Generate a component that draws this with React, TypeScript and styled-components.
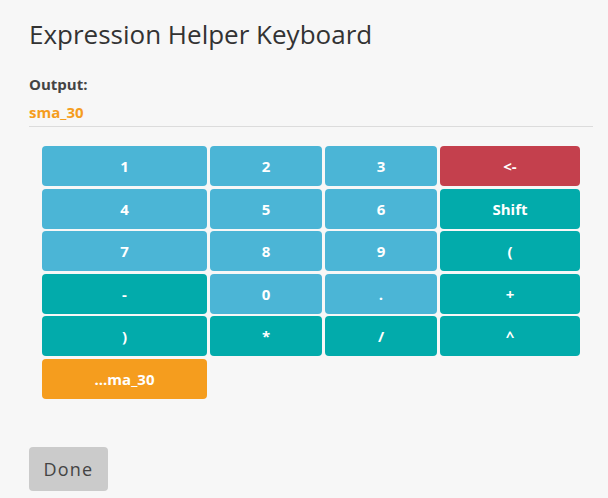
import styled, { createGlobalStyle } from 'styled-components';

const GlobalStyle = createGlobalStyle`
  html, body {
    margin: 0;
    padding: 0;
    background: #f7f7f7;
    font-family: "Open Sans", "Liberation Sans", sans-serif;
  }
`;

const Page = styled.div`
  width: 608px;
  height: 498px;
  box-sizing: border-box;
  padding: 16px 15px 0 29px;
  display: flex;
  flex-direction: column;
`;

const Title = styled.h1`
  margin: 0;
  font-size: 26px;
  font-weight: 400;
  line-height: 36px;
  color: #333;
`;

const OutputBlock = styled.div`
  margin-top: 22px;
  padding-bottom: 4px;
  border-bottom: 1px solid #dcdcdc;
`;

const Label = styled.div`
  font-size: 15px;
  font-weight: 700;
  color: #444;
  line-height: 20px;
`;

const OutputValue = styled.div`
  margin-top: 8px;
  font-size: 15px;
  font-weight: 700;
  color: #f59d1e;
  line-height: 20px;
`;

const Keyboard = styled.div`
  display: grid;
  grid-template-columns: 165px 112px 112px 140px;
  grid-auto-rows: 40px;
  column-gap: 3px;
  row-gap: 2.6px;
  margin: 19px 0 0 13px;
`;

type Tone = 'digit' | 'op' | 'del' | 'var';

const toneColors: Record<Tone, string> = {
  digit: '#4bb5d6',
  op: '#02abab',
  del: '#c4404d',
  var: '#f59d1e',
};

const Key = styled.button<{ $tone: Tone }>`
  border: none;
  border-radius: 4px;
  background: ${(p) => toneColors[p.$tone]};
  color: #fff;
  font-family: "Open Sans", "Liberation Sans", sans-serif;
  font-size: 15px;
  font-weight: 700;
  padding: 0;
  cursor: pointer;
`;

const Footer = styled.div`
  margin-top: 48px;
`;

const DoneButton = styled.button`
  width: 79px;
  height: 44px;
  border: none;
  border-radius: 4px;
  background: #cbcbcb;
  color: #444;
  font-family: "Open Sans", "Liberation Sans", sans-serif;
  font-size: 18px;
  letter-spacing: 1.2px;
  padding: 0;
`;

const keys: { label: string; tone: Tone }[] = [
  { label: '1', tone: 'digit' },
  { label: '2', tone: 'digit' },
  { label: '3', tone: 'digit' },
  { label: '<-', tone: 'del' },
  { label: '4', tone: 'digit' },
  { label: '5', tone: 'digit' },
  { label: '6', tone: 'digit' },
  { label: 'Shift', tone: 'op' },
  { label: '7', tone: 'digit' },
  { label: '8', tone: 'digit' },
  { label: '9', tone: 'digit' },
  { label: '(', tone: 'op' },
  { label: '-', tone: 'op' },
  { label: '0', tone: 'digit' },
  { label: '.', tone: 'digit' },
  { label: '+', tone: 'op' },
  { label: ')', tone: 'op' },
  { label: '*', tone: 'op' },
  { label: '/', tone: 'op' },
  { label: '^', tone: 'op' },
  { label: '...ma_30', tone: 'var' },
];

export default function App() {
  return (
    <>
      <GlobalStyle />
      <Page>
        <Title>Expression Helper Keyboard</Title>
        <OutputBlock>
          <Label>Output:</Label>
          <OutputValue>sma_30</OutputValue>
        </OutputBlock>
        <Keyboard>
          {keys.map((k, i) => (
            <Key key={i} $tone={k.tone}>
              {k.label}
            </Key>
          ))}
        </Keyboard>
        <Footer>
          <DoneButton>Done</DoneButton>
        </Footer>
      </Page>
    </>
  );
}
